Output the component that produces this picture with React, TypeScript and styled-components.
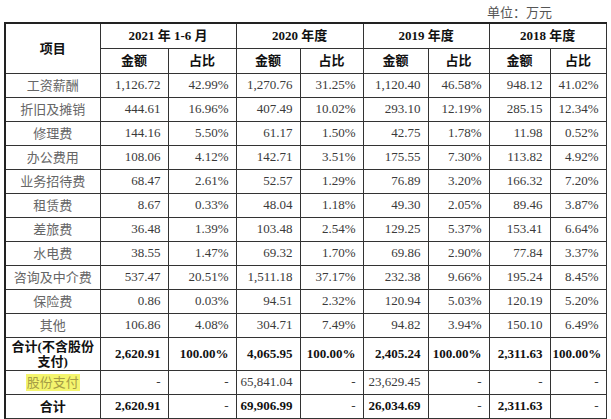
import React from 'react';
import styled, { createGlobalStyle } from 'styled-components';

const GlobalStyle = createGlobalStyle`
  html, body {
    margin: 0;
    padding: 0;
    background: #ffffff;
  }
`;

const serif = `"Liberation Serif", "Noto Sans CJK SC", serif`;
const cjk = `"Liberation Serif", "Noto Sans CJK SC", sans-serif`;

const Page = styled.div`
  width: 611px;
  height: 419px;
  overflow: hidden;
  padding-left: 4px;
  box-sizing: border-box;
`;

const UnitLabel = styled.div`
  height: 22px;
  width: 601px;
  box-sizing: border-box;
  padding: 6px 53px 0 0;
  text-align: right;
  font-family: ${cjk};
  font-size: 13px;
  line-height: 14px;
  color: #555;
`;

const Table = styled.table`
  width: 601px;
  table-layout: fixed;
  border-collapse: collapse;
  border-top: 2px solid #222;
  border-left: 2px solid #222;
  font-family: ${serif};
  font-size: 13px;
  color: #333;
`;

const HeadRow = styled.tr`
  height: 25px;
`;

const BodyRow = styled.tr<{ $tall?: boolean }>`
  height: ${(p) => (p.$tall ? '33px' : '24px')};
`;

const HeadCell = styled.th`
  border: 1px solid #333;
  padding: 0 2px;
  font-family: ${cjk};
  font-weight: 700;
  color: #111;
  text-align: center;
  vertical-align: middle;
  line-height: 15px;
`;

const ItemCell = styled.td<{ $bold?: boolean }>`
  border: 1px solid #333;
  padding: 0 4px;
  text-align: center;
  vertical-align: middle;
  font-family: ${cjk};
  font-weight: ${(p) => (p.$bold ? 700 : 400)};
  color: ${(p) => (p.$bold ? '#111' : '#666')};
  line-height: 15px;
`;

const NumCell = styled.td<{ $bold?: boolean }>`
  border: 1px solid #333;
  padding: 0 7px 0 2px;
  text-align: right;
  vertical-align: middle;
  white-space: nowrap;
  font-weight: ${(p) => (p.$bold ? 700 : 400)};
  color: ${(p) => (p.$bold ? '#111' : '#3a3a3a')};
`;

const Highlight = styled.span`
  background: #f4f56e;
  color: #a69d45;
  padding: 1px 1px;
`;

const widths = [95, 68, 68, 64, 63, 65, 61, 61, 56];

type Row = string[];

const rows: Row[] = [
  ['工资薪酬', '1,126.72', '42.99%', '1,270.76', '31.25%', '1,120.40', '46.58%', '948.12', '41.02%'],
  ['折旧及摊销', '444.61', '16.96%', '407.49', '10.02%', '293.10', '12.19%', '285.15', '12.34%'],
  ['修理费', '144.16', '5.50%', '61.17', '1.50%', '42.75', '1.78%', '11.98', '0.52%'],
  ['办公费用', '108.06', '4.12%', '142.71', '3.51%', '175.55', '7.30%', '113.82', '4.92%'],
  ['业务招待费', '68.47', '2.61%', '52.57', '1.29%', '76.89', '3.20%', '166.32', '7.20%'],
  ['租赁费', '8.67', '0.33%', '48.04', '1.18%', '49.30', '2.05%', '89.46', '3.87%'],
  ['差旅费', '36.48', '1.39%', '103.48', '2.54%', '129.25', '5.37%', '153.41', '6.64%'],
  ['水电费', '38.55', '1.47%', '69.32', '1.70%', '69.86', '2.90%', '77.84', '3.37%'],
  ['咨询及中介费', '537.47', '20.51%', '1,511.18', '37.17%', '232.38', '9.66%', '195.24', '8.45%'],
  ['保险费', '0.86', '0.03%', '94.51', '2.32%', '120.94', '5.03%', '120.19', '5.20%'],
  ['其他', '106.86', '4.08%', '304.71', '7.49%', '94.82', '3.94%', '150.10', '6.49%'],
];

const subtotal = ['2,620.91', '100.00%', '4,065.95', '100.00%', '2,405.24', '100.00%', '2,311.63', '100.00%'];
const shares = ['-', '-', '65,841.04', '-', '23,629.45', '-', '-', '-'];
const total = ['2,620.91', '-', '69,906.99', '-', '26,034.69', '-', '2,311.63', '-'];

const periods = ['2021 年 1-6 月', '2020 年度', '2019 年度', '2018 年度'];

export default function App() {
  return (
    <>
      <GlobalStyle />
      <Page>
        <UnitLabel>单位：万元</UnitLabel>
        <Table>
          <colgroup>
            {widths.map((w, i) => (
              <col key={i} style={{ width: w }} />
            ))}
          </colgroup>
          <thead>
            <HeadRow>
              <HeadCell rowSpan={2}>项目</HeadCell>
              {periods.map((p) => (
                <HeadCell key={p} colSpan={2}>
                  {p}
                </HeadCell>
              ))}
            </HeadRow>
            <HeadRow>
              {periods.map((p) => (
                <React.Fragment key={p}>
                  <HeadCell>金额</HeadCell>
                  <HeadCell>占比</HeadCell>
                </React.Fragment>
              ))}
            </HeadRow>
          </thead>
          <tbody>
            {rows.map(([name, ...vals]) => (
              <BodyRow key={name}>
                <ItemCell>{name}</ItemCell>
                {vals.map((v, i) => (
                  <NumCell key={i}>{v}</NumCell>
                ))}
              </BodyRow>
            ))}
            <BodyRow $tall>
              <ItemCell $bold>合计(不含股份支付)</ItemCell>
              {subtotal.map((v, i) => (
                <NumCell key={i} $bold>
                  {v}
                </NumCell>
              ))}
            </BodyRow>
            <BodyRow>
              <ItemCell>
                <Highlight>股份支付</Highlight>
              </ItemCell>
              {shares.map((v, i) => (
                <NumCell key={i}>{v}</NumCell>
              ))}
            </BodyRow>
            <BodyRow>
              <ItemCell $bold>合计</ItemCell>
              {total.map((v, i) => (
                <NumCell key={i} $bold={v !== '-'}>
                  {v}
                </NumCell>
              ))}
            </BodyRow>
          </tbody>
        </Table>
      </Page>
    </>
  );
}
